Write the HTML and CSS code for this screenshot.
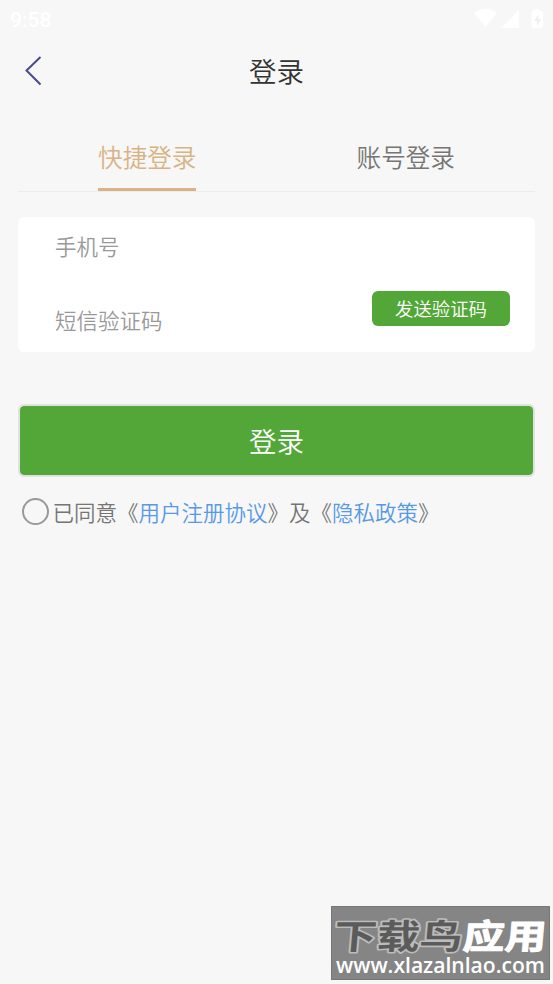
FILE: index.html
```html
<!DOCTYPE html>
<html lang="zh-CN">
<head>
<meta charset="utf-8">
<title>登录</title>
<link rel="stylesheet" href="styles.css">
</head>
<body>
<div class="status">
  <span class="time">9:58</span>
  <svg class="status-icons" width="72" height="22" viewBox="0 0 72 22" fill="#fff">
    <path d="M1 4Q12.500-4 24 4L12.500 18Z"/>
    <path d="M46 1V19H28Z"/>
    <path d="M61 0h5v2h2q2 0 2 2v13q0 2-2 2h-7.500q-2 0-2-2V4q0-2 1.500-2Z"/>
    <path d="M66 5l-5 7h3v5l4-7h-3Z" fill="#efefef"/>
  </svg>
</div>
<header class="header">
  <svg class="back" width="20" height="30" viewBox="0 0 20 30"><path d="M16.500 1L2.500 14.500L16.500 28.500" fill="none" stroke="#494a8b" stroke-width="2"/></svg>
  <h1>登录</h1>
</header>
<nav class="tabs">
  <div class="tab"><span class="label active">快捷登录</span></div>
  <div class="tab"><span class="label">账号登录</span></div>
</nav>
<section class="card">
  <div class="field phone">手机号</div>
  <div class="field code"><span>短信验证码</span><button class="send">发送验证码</button></div>
</section>
<button class="submit">登录</button>
<div class="consent"><span class="radio"></span><span>已同意《<a>用户注册协议</a>》及《<a>隐私政策</a>》</span></div>
<div class="watermark">
  <svg width="219" height="74" viewBox="0 0 219 74">
    <g class="brand">
      <text class="dark" x="0" y="0" transform="translate(2 43) skewX(-5) scale(1.160 .93)">下载鸟</text>
      <text class="light" x="0" y="0" transform="translate(131 43) skewX(-5) scale(1.130 .93)">应用</text>
    </g>
    <text class="site" x="5" y="67" textLength="209" lengthAdjust="spacingAndGlyphs">www.xlazalnlao.com</text>
  </svg>
</div>
</body>
</html>
```
FILE: styles.css
```css
* { box-sizing: border-box; }
body {
  margin: 0;
  height: 984px;
  overflow: hidden;
  background: #f7f7f7;
  color: #757575;
  font-family: "Noto Sans CJK SC", sans-serif;
  font-weight: 350;
}
button { border: 0; padding: 0; font: inherit; color: #fff; background: #52a738; }
.status {
  height: 38px;
  padding: 9px 9px 0 10px;
  display: flex;
  justify-content: space-between;
}
.time { font: 500 21px/22px Roboto, sans-serif; color: #fff; }
.status-icons { margin-right: -1px; }
.header { height: 67px; padding: 0 24px 2px; display: grid; grid-template-columns: 20px 1fr 20px; align-items: center; }
.header h1 { margin: 0; text-align: center; font-size: 27.5px; line-height: 40px; font-weight: 350; color: #333; transform: translateY(-1px); }
.tabs { margin: 19px 18px 0; height: 68px; display: flex; border-bottom: 1px solid #ececec; }
.tab { flex: 1; display: flex; justify-content: center; }
.label { height: 67px; padding-top: 14px; font-size: 24.6px; line-height: 36px; border-bottom: 3px solid transparent; }
.active { color: #d8b384; border-color: #d8b384; }
.card { margin: 25px 18px 0; height: 135px; padding: 9px 25px 0 37px; border-radius: 6px; background: #fff; color: #999; }
.field { font-size: 21.5px; line-height: 40px; }
.phone { height: 64px; }
.code { display: flex; justify-content: space-between; padding-top: 10px; }
.send { margin-top: -9px; width: 138px; height: 35px; border-radius: 6px; font-size: 18.4px; line-height: 35px; }
.submit { display: block; margin: 52px 18px 0; width: 517px; height: 73px; border: 2px solid #e1e1e1; border-radius: 6px; background-clip: padding-box; font-size: 27.5px; line-height: 69px; }
.consent { margin: 16px 22px 0 21.5px; height: 37px; display: flex; align-items: center; font-size: 21.5px; line-height: 36px; white-space: nowrap; }
.radio { width: 27px; height: 27px; margin-right: 4px; border: 2px solid #999; border-radius: 50%; }
.consent a { color: #5899e5; }
.watermark { position: absolute; left: 331px; top: 906px; width: 219px; height: 74px; background: #858585; border: 1px solid #777; }
.watermark svg { display: block; margin: -1px; }
.brand { font-size: 37px; font-weight: 700; paint-order: stroke; stroke-linejoin: round; }
.dark { fill: #5b5b5b; stroke: #bcbcbc; stroke-width: 3.5px; }
.light { fill: #fff; stroke: #fff; stroke-width: 1px; }
.site { font: 600 21px "Open Sans", sans-serif; fill: #fff; }
```
